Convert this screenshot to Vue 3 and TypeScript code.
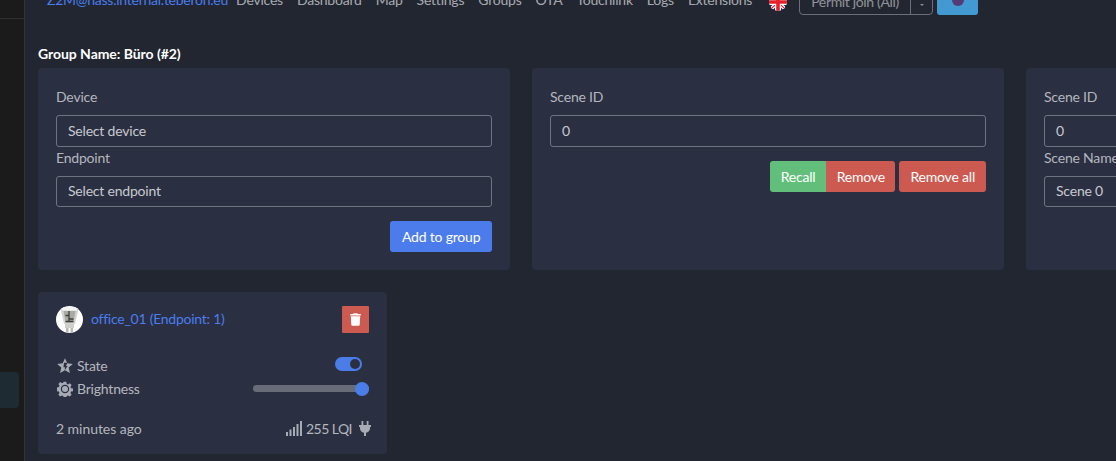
<script setup lang="ts">
const navLinks: string[] = ['Devices', 'Dashboard', 'Map', 'Settings', 'Groups', 'OTA', 'Touchlink', 'Logs', 'Extensions']
</script>

<template>
  <div class="page">
    <aside class="sidebar">
      <div class="side-rule"></div>
      <div class="side-active"></div>
    </aside>
    <main class="main">
      <nav class="nav">
        <a class="brand">Z2M@hass.internal.teberon.eu</a>
        <a v-for="l in navLinks" :key="l" class="nav-link">{{ l }}</a>
        <svg class="flag" viewBox="0 0 18 18" width="18" height="18">
          <defs><clipPath id="fc"><circle cx="9" cy="9" r="9" /></clipPath></defs>
          <g clip-path="url(#fc)">
            <rect width="18" height="18" fill="#1d2a6b" />
            <path d="M0 0 18 18M18 0 0 18" stroke="#fff" stroke-width="3.6" />
            <path d="M0 0 18 18M18 0 0 18" stroke="#e8202a" stroke-width="1.2" />
            <path d="M9 0V18M0 9H18" stroke="#fff" stroke-width="6" />
            <path d="M9 0V18M0 9H18" stroke="#e8202a" stroke-width="3.6" />
          </g>
        </svg>
        <div class="permit">
          <span class="permit-main">Permit join (All)</span>
          <span class="permit-caret"><i></i></span>
        </div>
        <div class="theme-btn"><i></i></div>
      </nav>

      <h2 class="title">Group Name: Büro (#2)</h2>

      <div class="cards">
        <section class="card form-card">
          <label>Device</label>
          <div class="input">Select device</div>
          <label>Endpoint</label>
          <div class="input">Select endpoint</div>
          <div class="actions"><button class="btn blue">Add to group</button></div>
        </section>
        <section class="card form-card">
          <label>Scene ID</label>
          <div class="input">0</div>
          <div class="actions scene-actions">
            <div class="group">
              <button class="btn green">Recall</button>
              <button class="btn red">Remove</button>
            </div>
            <button class="btn red all">Remove all</button>
          </div>
        </section>
        <section class="card form-card">
          <label>Scene ID</label>
          <div class="input">0</div>
          <label>Scene Name</label>
          <div class="input">Scene 0</div>
        </section>
      </div>

      <section class="card device">
        <header class="dev-head">
          <svg class="avatar" viewBox="0 0 27 27" width="27" height="27">
            <defs><clipPath id="av"><circle cx="13.5" cy="13.5" r="13.5" /></clipPath></defs>
            <circle cx="13.5" cy="13.5" r="13.5" fill="#fff" />
            <g clip-path="url(#av)">
              <path d="M4 1h19l-4 17H8z" fill="#d4d4d1" />
              <path d="M5 1h17l-1 3.500H6z" fill="#f4f4f2" />
              <path d="M7.500 5h12l-2 11.500h-8z" fill="#a9a9a5" />
              <path d="M13 5v10.500M9.500 9.500h3.500M13 13h4.500M9.500 15.500h8" stroke="#3f3f3d" stroke-width="1.300" fill="none" />
              <rect x="9" y="18" width="9" height="4" fill="#cfcfcd" />
              <rect x="10" y="22" width="2.500" height="5" fill="#b8b8b6" />
              <rect x="14.500" y="22" width="2.500" height="5" fill="#b8b8b6" />
            </g>
          </svg>
          <a class="dev-name">office_01 (Endpoint: 1)</a>
          <button class="trash">
            <svg viewBox="0 0 448 512" width="11" height="13">
              <path fill="#fff" d="M135 17.700C140.400 6.800 151.500 0 163.600 0h120.800c12.100 0 23.200 6.800 28.600 17.700L320 32h96c17.700 0 32 14.300 32 32s-14.300 32-32 32H32C14.300 96 0 81.700 0 64s14.300-32 32-32h96l7-14.300zM32 128h384l-21.200 339c-1.600 25.300-22.600 45-47.900 45H101.100c-25.300 0-46.300-19.700-47.900-45L32 128z" />
            </svg>
          </button>
        </header>

        <div class="row state-row">
          <svg class="ic" viewBox="0 0 16 16" width="16" height="16">
            <path fill="#a7acb4" d="M8 .3l2.300 5 5.500.6-4.100 3.700 1.200 5.500L8 12.300l-4.900 2.800 1.200-5.500L.2 5.900l5.500-.6z" />
            <path d="M7 4.800h3.400L9 8h1.600l-3 4.500.5-3.300H6.500z" fill="#2a2f42" />
          </svg>
          <span class="row-label">State</span>
          <span class="toggle"><i></i></span>
        </div>
        <div class="row bright-row">
          <svg class="ic" viewBox="0 0 16 16" width="16" height="16">
            <path fill="#a7acb4" fill-rule="evenodd" d="M6.700.8h2.600l.4 2 1.300.6 1.800-1.100 1.800 1.800-1.100 1.800.6 1.300 2 .4v2.600l-2 .4-.6 1.300 1.100 1.800-1.800 1.800-1.800-1.100-1.300.6-.4 2H6.700l-.4-2-1.300-.6-1.800 1.100-1.800-1.800 1.100-1.800-.6-1.300-2-.4V6.400l2-.4.600-1.300-1.100-1.800 1.800-1.800 1.800 1.100 1.300-.6zM8 3.800a4.200 4.200 0 1 0 0 8.400 4.200 4.200 0 0 0 0-8.400z" />
            <circle cx="8" cy="8" r="3" fill="#a7acb4" />
          </svg>
          <span class="row-label">Brightness</span>
          <span class="slider"><i></i></span>
        </div>

        <footer class="dev-foot">
          <span class="ago">2 minutes ago</span>
          <span class="foot-right">
            <svg viewBox="0 0 17 15" width="17" height="15" class="signal">
              <rect x="0" y="11" width="2" height="4" fill="#a7acb4" />
              <rect x="3.500" y="8.500" width="2" height="6.500" fill="#a7acb4" />
              <rect x="7" y="6" width="2" height="9" fill="#a7acb4" />
              <rect x="10.500" y="3" width="2" height="12" fill="#a7acb4" />
              <rect x="14" y="0" width="2" height="15" fill="#a7acb4" />
            </svg>
            <span class="lqi">255 LQI</span>
            <svg viewBox="0 0 12 15" width="12" height="15" class="plug">
              <path fill="#a7acb4" d="M2.500 0h1.800v4h3.400V0h1.800v4H12v2h-1v1.500C11 9.800 9.300 11.400 7 11.800V15H5v-3.200C2.700 11.400 1 9.800 1 7.500V6H0V4h2.500z" />
            </svg>
          </span>
        </footer>
      </section>
    </main>
  </div>
</template>

<style>
html, body { margin: 0; background: #212631; overflow: hidden; }
</style>

<style scoped>
.page {
  display: flex;
  width: 1116px;
  height: 461px;
  overflow: hidden;
  background: #212631;
  font-family: Lato, "Noto Sans", sans-serif;
  font-size: 14px;
  line-height: 21px;
  letter-spacing: -0.2px;
  color: rgba(255, 255, 255, 0.66);
}
.sidebar {
  flex: 0 0 24px;
  width: 24px;
  background: #1b1b1b;
  border-right: 1px solid #343434;
  box-sizing: content-box;
  display: flex;
  flex-direction: column;
}
.side-rule { margin-top: 18px; height: 1px; background: #2e2e2e; }
.side-active {
  margin-top: 353px;
  width: 19px;
  height: 36px;
  background: #1f2b33;
  border-radius: 0 4px 4px 0;
}
.main { flex: 1; min-width: 0; padding-left: 13px; }
.nav {
  display: flex;
  align-items: flex-start;
  height: 15px;
  margin-top: -11px;
  padding-left: 9px;
  white-space: nowrap;
}
.brand { color: #4a7dee; margin-right: 8px; letter-spacing: -0.25px; }
.nav-link { margin-right: 14px; letter-spacing: -0.22px; color: rgba(255, 255, 255, 0.62); }
.flag { margin: 4px 12px 0 3px; flex: none; }
.permit {
  display: flex;
  flex: none;
  height: 25px;
  margin: 1px 4px 0 0;
  border: 1px solid #6b6f7c;
  border-radius: 4px;
  box-sizing: border-box;
  color: rgba(255, 255, 255, 0.5);
}
.permit-main { width: 111px; padding-left: 11px; box-sizing: border-box; border-right: 1px solid #6b6f7c; letter-spacing: -0.35px; }
.permit-caret { width: 21px; display: flex; justify-content: center; padding-top: 13px; box-sizing: border-box; }
.permit-caret i { width: 0; height: 0; border: 2.5px solid transparent; border-top-color: #8b8f9a; }
.theme-btn {
  flex: none;
  width: 41px;
  height: 25px;
  margin-top: 1px;
  background: #4399d1;
  border-radius: 0 0 3px 3px;
  display: flex;
  justify-content: center;
}
.theme-btn i { width: 12px; height: 12px; margin-top: 4px; border-radius: 50%; background: #553a78; }
.title {
  margin: 39px 0 4px;
  font-size: 14px;
  line-height: 21px;
  font-weight: 700;
  letter-spacing: -0.05px;
  color: #fff;
}
.cards { display: flex; gap: 22px; }
.card { background: #2a2f42; border-radius: 4px; box-sizing: border-box; flex: none; }
.form-card { width: 472px; height: 202px; padding: 18px; }
label { display: block; margin-bottom: 8px; }
.input {
  height: 31.5px;
  box-sizing: border-box;
  border: 1px solid #6f7380;
  border-radius: 3px;
  padding: 3.9px 11px;
  color: rgba(255, 255, 255, 0.75);
}
.actions { display: flex; justify-content: flex-end; margin-top: 14px; }
.btn {
  height: 31px;
  padding: 0 10.6px;
  border: 0;
  border-radius: 3px;
  font: inherit;
  letter-spacing: inherit;
  color: #fff;
}
.blue { background: #4c7ceb; padding: 0 11.7px; }
.green { background: #62bf7b; border-radius: 3px 0 0 3px; }
.red { background: #cd5a50; }
.all { padding: 0 11px; }
.group { display: flex; margin-right: 4px; }
.group .red { border-radius: 0 3px 3px 0; }
.device {
  width: 349px;
  height: 162px;
  margin-top: 22px;
  padding: 14px 18px 0;
}
.dev-head { display: flex; align-items: center; height: 27px; }
.avatar { flex: none; }
.dev-name { color: #4a7dee; margin: 0 0 3px 8px; flex: 1; letter-spacing: -0.25px; }
.trash {
  width: 27px;
  height: 27px;
  padding: 0;
  border: 0;
  background: #cd5a50;
  border-radius: 1px;
  display: flex;
  align-items: center;
  justify-content: center;
}
.row { display: flex; align-items: center; height: 21px; }
.state-row { margin-top: 22px; }
.bright-row { margin-top: 2px; }
.ic { margin-left: 1px; flex: none; }
.row-label { margin-left: 4px; flex: 1; }
.toggle {
  width: 27px;
  height: 14px;
  margin-right: 7px;
  border-radius: 7px;
  background: #4a7de8;
  display: flex;
  justify-content: flex-end;
  align-items: center;
  padding-right: 2px;
  box-sizing: border-box;
  margin-top: -3px;
}
.toggle i { width: 10px; height: 10px; border-radius: 50%; background: #2a2f42; }
.slider {
  width: 116px;
  height: 7px;
  border-radius: 4px;
  background: #686c78;
  display: flex;
  justify-content: flex-end;
  align-items: center;
}
.slider i { width: 14px; height: 14px; border-radius: 50%; background: #4a7de8; }
.dev-foot {
  display: flex;
  justify-content: space-between;
  align-items: center;
  margin-top: 19px;
  height: 21px;
}
.ago { letter-spacing: -0.05px; }
.foot-right { display: flex; align-items: center; margin-right: -2px; }
.lqi { margin: 0 7px 0 3px; letter-spacing: -0.55px; }
</style>
